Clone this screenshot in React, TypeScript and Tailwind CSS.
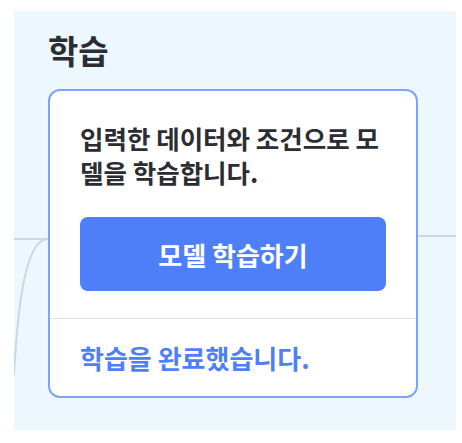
import React from 'react';

const font = { fontFamily: '"Noto Sans CJK KR", "Noto Sans", sans-serif' };

export default function App() {
  return (
    <div className="w-[462px] h-[443px] bg-white pt-[11px] pl-[14px]" style={font}>
      <div className="relative w-[442px] h-[419px] bg-[#edf8fe] pt-[21px] pl-[34px]">
        {/* connection edges behind the node */}
        <svg className="absolute inset-0" width="442" height="419" fill="none">
          <path d="M0 228 H34" stroke="#c9d9e3" strokeWidth="2" />
          <path d="M34 228 C12 228 4 290 0 364" stroke="#c9d9e3" strokeWidth="2" />
          <path d="M400 225 H442" stroke="#c9d9e3" strokeWidth="2" />
        </svg>

        <h2 className="relative text-[33px] leading-[37px] font-bold text-[#2b2d33]">학습</h2>

        <div className="relative mt-[20px] w-[370px] rounded-[12px] border-2 border-[#7ea3f8] bg-white">
          <div className="px-[30px] pt-[30px] pb-[27px]">
            <p className="text-[25.5px] leading-[34px] font-semibold text-[#2b2d33]">
              입력한 데이터와 조건으로 모델을 학습합니다.
            </p>
            <button className="mt-[28px] w-full h-[74px] rounded-[8px] bg-[#4f7ff8] text-white text-[26px] font-bold">
              모델 학습하기
            </button>
          </div>
          <div className="border-t border-[#dbe7f5] px-[30px] pt-[22px] pb-[21px]">
            <p className="text-[26px] leading-[34px] font-bold text-[#4f7ff8]">
              학습을 완료했습니다.
            </p>
          </div>
        </div>
      </div>
    </div>
  );
}
